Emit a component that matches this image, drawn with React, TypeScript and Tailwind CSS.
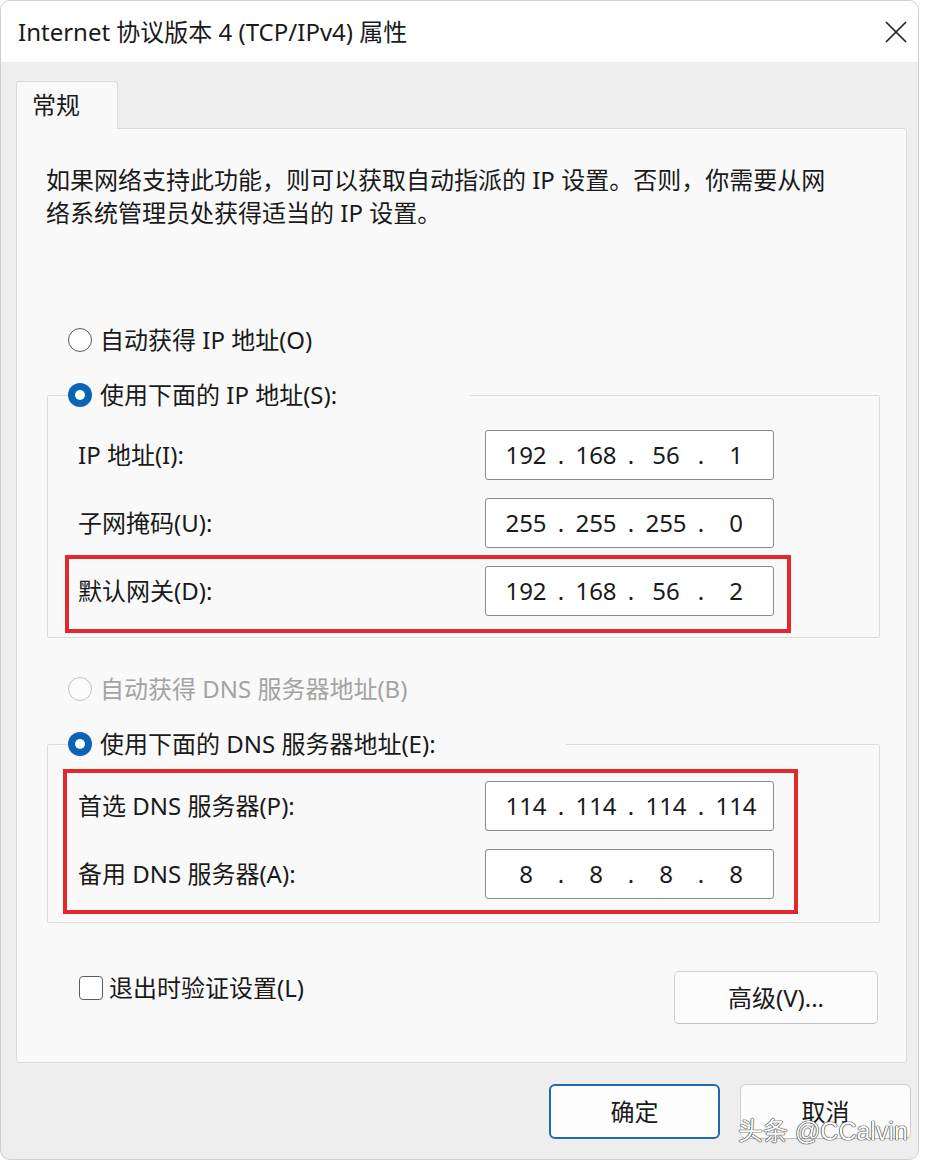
import type { ReactNode } from "react";

const ipRows = [
    { label: "IP 地址(I):", parts: ["192", "168", "56", "1"] },
    { label: "子网掩码(U):", parts: ["255", "255", "255", "0"] },
];

const gateway = { label: "默认网关(D):", parts: ["192", "168", "56", "2"] };

const dnsRows = [
    { label: "首选 DNS 服务器(P):", parts: ["114", "114", "114", "114"] },
    { label: "备用 DNS 服务器(A):", parts: ["8", "8", "8", "8"] },
];

function IpBox({ parts }: { parts: string[] }) {
    return (
        <div className="w-[289px] h-[50px] bg-white border border-[#8a8a8a] rounded-[3px] flex items-center pl-[9px] text-[24px] text-[#1a1a1a]">
            {parts.map((p, i) => (
                <div key={i} className="flex items-center">
                    {i > 0 && <span className="w-[8px] text-center">.</span>}
                    <span className="w-[62px] text-center">{p}</span>
                </div>
            ))}
        </div>
    );
}

function Row({ label, parts, children }: { label: string; parts: string[]; children?: ReactNode }) {
    return (
        <div className="relative h-[50px] flex items-center justify-between pl-[30px] pr-[105px]">
            <span>{label}</span>
            <IpBox parts={parts} />
            {children}
        </div>
    );
}

function Radio({ checked, disabled }: { checked?: boolean; disabled?: boolean }) {
    if (checked) {
        return (
            <div className="w-[24px] h-[24px] rounded-full bg-[#0b63b8] flex items-center justify-center">
                <div className="w-[10px] h-[10px] rounded-full bg-white" />
            </div>
        );
    }
    return (
        <div
            className={
                disabled
                    ? "w-[24px] h-[24px] rounded-full border-[1.5px] border-[#c2c2c2] bg-[#fbfbfb]"
                    : "w-[24px] h-[24px] rounded-full border-[1.5px] border-[#5c5c5c] bg-white"
            }
        />
    );
}

export default function App() {
    return (
        <div className="relative w-[926px] h-[1164px] bg-white text-[#1a1a1a] font-['Noto_Sans','Noto_Sans_CJK_SC',sans-serif] text-[24px]">
            <div className="w-[919px] h-[1160px] rounded-[10px] border border-[#cfcfcf] bg-[#eeeeee] overflow-hidden flex flex-col">
                {/* Title bar */}
                <div className="h-[61px] bg-white flex items-center justify-between pl-[17px] pr-[11px]">
                    <span className="text-[24px]">Internet 协议版本 4 (TCP/IPv4) 属性</span>
                    <svg width="22" height="22" viewBox="0 0 22 22">
                        <path d="M1 1L21 21M21 1L1 21" stroke="#1a1a1a" strokeWidth="1.6" />
                    </svg>
                </div>

                {/* Tabs + panel */}
                <div className="pl-[15px] pt-[19px]">
                    <div className="relative z-10 -mb-px w-[102px] h-[48px] bg-[#f9f9f9] border border-b-0 border-[#dadada] rounded-t-[3px] flex items-center pl-[15px] pb-[2px]">
                        常规
                    </div>
                    <div className="w-[891px] h-[935px] bg-[#f9f9f9] border border-[#dadada] rounded-b-[3px] rounded-tr-[3px]">
                        <p className="pl-[29px] pt-[34px] leading-[33px]">
                            如果网络支持此功能，则可以获取自动指派的 IP 设置。否则，你需要从网
                            <br />
                            络系统管理员处获得适当的 IP 设置。
                        </p>

                        <div className="mt-[94px] pl-[51px] h-[34px] flex items-center gap-[8px]">
                            <Radio />
                            <span>自动获得 IP 地址(O)</span>
                        </div>

                        <fieldset className="mt-[21px] ml-[30px] mr-[26px] border border-[#dcdcdc] rounded-[2px]">
                            <legend className="ml-[20px] w-[402px] h-[34px] flex items-center gap-[8px]">
                                <Radio checked />
                                <span>使用下面的 IP 地址(S):</span>
                            </legend>
                            <div className="pt-[18px] pb-[21px] flex flex-col gap-[18px]">
                                {ipRows.map((r) => (
                                    <Row key={r.label} label={r.label} parts={r.parts} />
                                ))}
                                <Row label={gateway.label} parts={gateway.parts}>
                                    <div className="absolute -top-[11px] -bottom-[17px] left-[17px] right-[88px] border-4 border-[#e2282b]" />
                                </Row>
                            </div>
                        </fieldset>

                        <div className="mt-[34px] pl-[51px] h-[34px] flex items-center gap-[8px] text-[#a3a3a3]">
                            <Radio disabled />
                            <span>自动获得 DNS 服务器地址(B)</span>
                        </div>

                        <fieldset className="mt-[21px] ml-[30px] mr-[26px] border border-[#dcdcdc] rounded-[2px]">
                            <legend className="ml-[20px] w-[498px] h-[34px] flex items-center gap-[8px]">
                                <Radio checked />
                                <span>使用下面的 DNS 服务器地址(E):</span>
                            </legend>
                            <div className="pt-[20px] pb-[23px]">
                                <div className="relative flex flex-col gap-[18px]">
                                    {dnsRows.map((r) => (
                                        <Row key={r.label} label={r.label} parts={r.parts} />
                                    ))}
                                    <div className="absolute -top-[12px] -bottom-[15px] left-[15px] right-[81px] border-4 border-[#e2282b]" />
                                </div>
                            </div>
                        </fieldset>

                        <div className="mt-[48px] pl-[62px] pr-[28px] flex items-start justify-between">
                            <div className="h-[34px] flex items-center gap-[6px]">
                                <div className="w-[24px] h-[24px] rounded-[4px] border-[1.5px] border-[#5c5c5c] bg-white" />
                                <span>退出时验证设置(L)</span>
                            </div>
                            <button className="w-[204px] h-[53px] bg-[#fcfcfc] border border-[#d2d2d2] border-b-[#c0c0c0] rounded-[5px]">
                                高级(V)...
                            </button>
                        </div>
                    </div>
                </div>

                {/* Footer */}
                <div className="pt-[21px] pr-[7px] flex justify-end gap-[20px]">
                    <button className="w-[171px] h-[55px] bg-[#fdfdfd] border-2 border-[#2268b0] rounded-[6px]">
                        确定
                    </button>
                    <button className="w-[171px] h-[55px] bg-[#fcfcfc] border border-[#d0d0d0] border-b-[#bfbfbf] rounded-[6px]">
                        取消
                    </button>
                </div>
            </div>

            {/* watermark */}
            <div className="absolute left-[738px] top-[1114px] text-[25px] leading-[34px] text-white font-['Liberation_Sans','Noto_Sans_CJK_SC',sans-serif] [text-shadow:0_0_1px_#222,0_0_1px_#222,0_0_1px_#222]">
                头条 @CCalvin
            </div>
        </div>
    );
}
